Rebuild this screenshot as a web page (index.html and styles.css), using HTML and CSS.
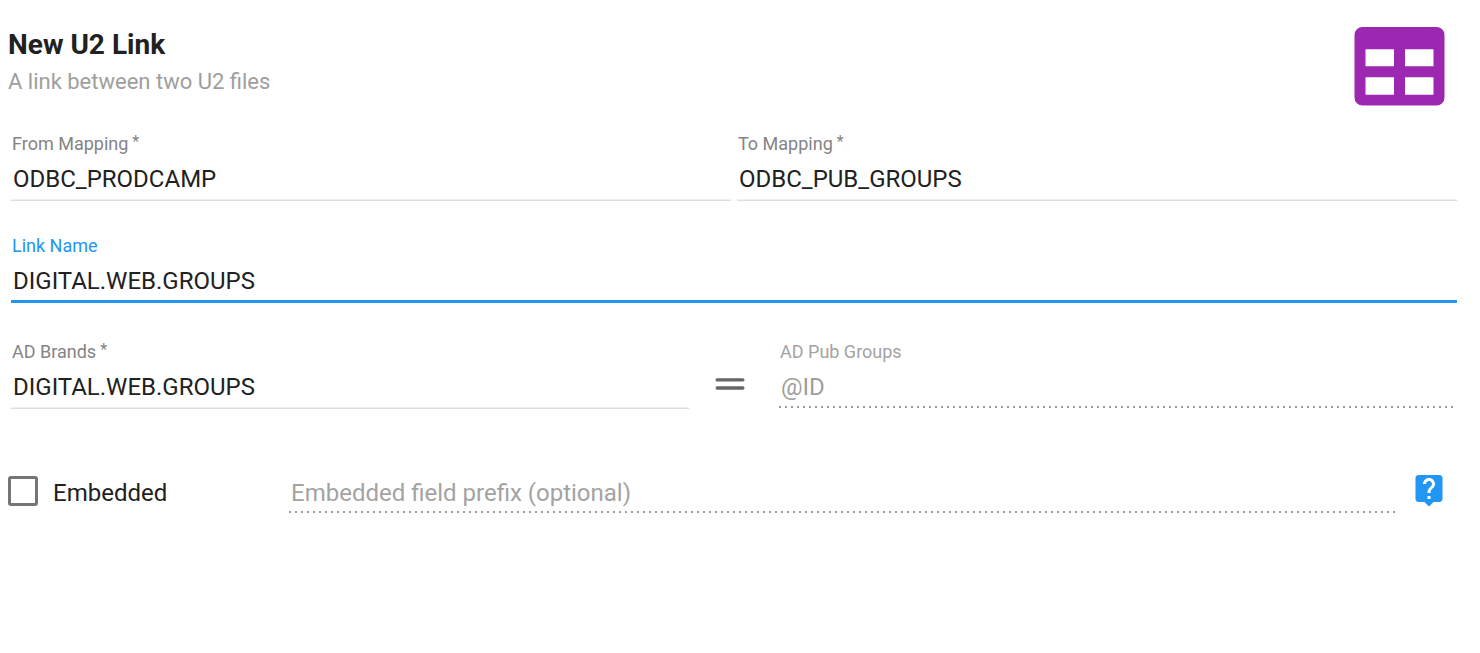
FILE: index.html
```html
<!DOCTYPE html>
<html lang="en">
<head>
<meta charset="utf-8">
<title>New U2 Link</title>
<link rel="stylesheet" href="styles.css">
</head>
<body>
<form class="link-form">
  <header class="header">
    <div class="heading">
      <h1 class="title">New U2 Link</h1>
      <p class="subtitle">A link between two U2 files</p>
    </div>
    <svg class="table-icon" viewBox="0 0 91 79" aria-hidden="true">
      <path fill="#9c27b0" fill-rule="evenodd" d="M8.500 0H82.500a8 8 0 0 1 8 8V70.500a8 8 0 0 1-8 8H8.500a8 8 0 0 1-8-8V8a8 8 0 0 1 8-8ZM11.500 22.300V39.200H40V22.300ZM51 22.300V39.200H79.500V22.300ZM11.500 50.300V67.700H40V50.300ZM51 50.300V67.700H79.500V50.300Z"/>
    </svg>
  </header>

  <div class="row">
    <div class="field">
      <label class="label" for="from">From Mapping<span class="star">*</span></label>
      <input class="input" id="from" type="text" value="ODBC_PRODCAMP">
    </div>
    <div class="field">
      <label class="label" for="to">To Mapping<span class="star">*</span></label>
      <input class="input" id="to" type="text" value="ODBC_PUB_GROUPS">
    </div>
  </div>

  <div class="row">
    <div class="field field-active">
      <label class="label" for="name">Link Name</label>
      <input class="input" id="name" type="text" value="DIGITAL.WEB.GROUPS">
    </div>
  </div>

  <div class="row row-match">
    <div class="field">
      <label class="label" for="brands">AD Brands<span class="star">*</span></label>
      <input class="input" id="brands" type="text" value="DIGITAL.WEB.GROUPS">
    </div>
    <div class="equals">
      <svg class="equals-icon" viewBox="0 0 30 12" role="img" aria-label="equals">
        <path stroke="#666" stroke-width="3.400" stroke-linecap="round" d="M2.200 1.900H27.800M2.200 10H27.800"/>
      </svg>
    </div>
    <div class="field field-disabled">
      <label class="label" for="groups">AD Pub Groups</label>
      <input class="input" id="groups" type="text" value="@ID" disabled>
    </div>
  </div>

  <div class="row row-embed">
    <label class="check" for="embedded"><input class="box" id="embedded" type="checkbox"><span class="check-text">Embedded</span></label>
    <div class="field field-disabled">
      <input class="input input-prefix" type="text" placeholder="Embedded field prefix (optional)" aria-label="Embedded field prefix" disabled>
    </div>
    <button class="help" type="button" aria-label="Help">
      <svg class="help-icon" viewBox="0 0 24 24" aria-hidden="true">
        <path fill="#2196f3" d="M19 2H5c-1.110 0-2 .9-2 2v14c0 1.100.89 2 2 2h4l3 3 3-3h4c1.100 0 2-.9 2-2V4c0-1.100-.9-2-2-2zm-6 16h-2v-2h2v2zm2.070-7.750l-.9.920C13.450 11.900 13 12.500 13 14h-2v-.5c0-1.100.45-2.100 1.170-2.830l1.240-1.260c.37-.36.59-.86.59-1.410 0-1.100-.9-2-2-2s-2 .9-2 2H8c0-2.210 1.790-4 4-4s4 1.790 4 4c0 .88-.36 1.680-.93 2.250z"/>
      </svg>
    </button>
  </div>
</form>
</body>
</html>
```
FILE: styles.css
```css
* { box-sizing: border-box; }

body {
  margin: 0;
  background: #fff;
  color: #212121;
  font-family: Roboto, "Liberation Sans", sans-serif;
  font-size: 24px;
}

.link-form { padding: 27px 20px 27px 8px; }

.header {
  display: flex;
  justify-content: space-between;
  align-items: flex-start;
  padding-right: 15px;
  margin-bottom: 28px;
}

.title {
  margin: 0;
  font-size: 28px;
  line-height: 36px;
  font-weight: 700;
}

.subtitle {
  margin: 0;
  color: #9e9e9e;
  font-size: 22px;
  line-height: 38px;
}

.table-icon { width: 91px; height: 79px; }

.row {
  display: flex;
  margin-bottom: 35px;
}

.field {
  flex: 1;
  min-width: 0;
  margin: 0 3px;
}

.label {
  display: block;
  margin-bottom: 6px;
  padding-left: 1px;
  color: #848484;
  font-size: 18px;
  line-height: 20px;
}

.star {
  margin-left: 4px;
  font-size: 16px;
  line-height: 16px;
  vertical-align: top;
}

.input {
  display: block;
  width: 100%;
  height: 41px;
  padding: 0 2px 2px;
  border: 0;
  border-bottom: 1px solid #dedede;
  box-shadow: inset 0 -1px #f0f0f0;
  border-radius: 0;
  outline: 0;
  background: transparent;
  color: #212121;
  font: inherit;
}

.field-active .label { color: #2196f3; }

.field-active .input {
  padding-bottom: 0;
  border-bottom: 3px solid #2196f3;
  box-shadow: none;
}

.field-disabled .label { color: #a3a3a3; }

.field-disabled .input {
  height: 40px;
  padding-bottom: 2px;
  border-bottom: 0;
  box-shadow: none;
  color: #9e9e9e;
  background: repeating-linear-gradient(to right, #9e9e9e 0 2px, transparent 2px 6px) left bottom / 100% 2px no-repeat;
}

.field-disabled .input-prefix {
  height: 41px;
  padding-bottom: 0;
}

.input::placeholder { color: #a3a3a3; opacity: 1; }

.row-match { margin: 39px 0 63px; }

.equals {
  width: 84px;
  padding: 36px 0 0 23px;
}

.equals-icon { display: block; width: 30px; height: 12px; }

.row-embed {
  align-items: flex-start;
  margin: 0;
}

.check {
  display: flex;
  width: 278px;
  padding-top: 4px;
}

.box {
  appearance: none;
  width: 30px;
  height: 30px;
  margin: 0 15px 0 0;
  border: 3px solid #757575;
  border-radius: 3px;
}

.check-text { line-height: 34px; }

.help {
  margin: 0 13px 0 10px;
  padding: 0;
  border: 0;
  background: none;
}

.help-icon { display: block; width: 36px; height: 36px; }
```
